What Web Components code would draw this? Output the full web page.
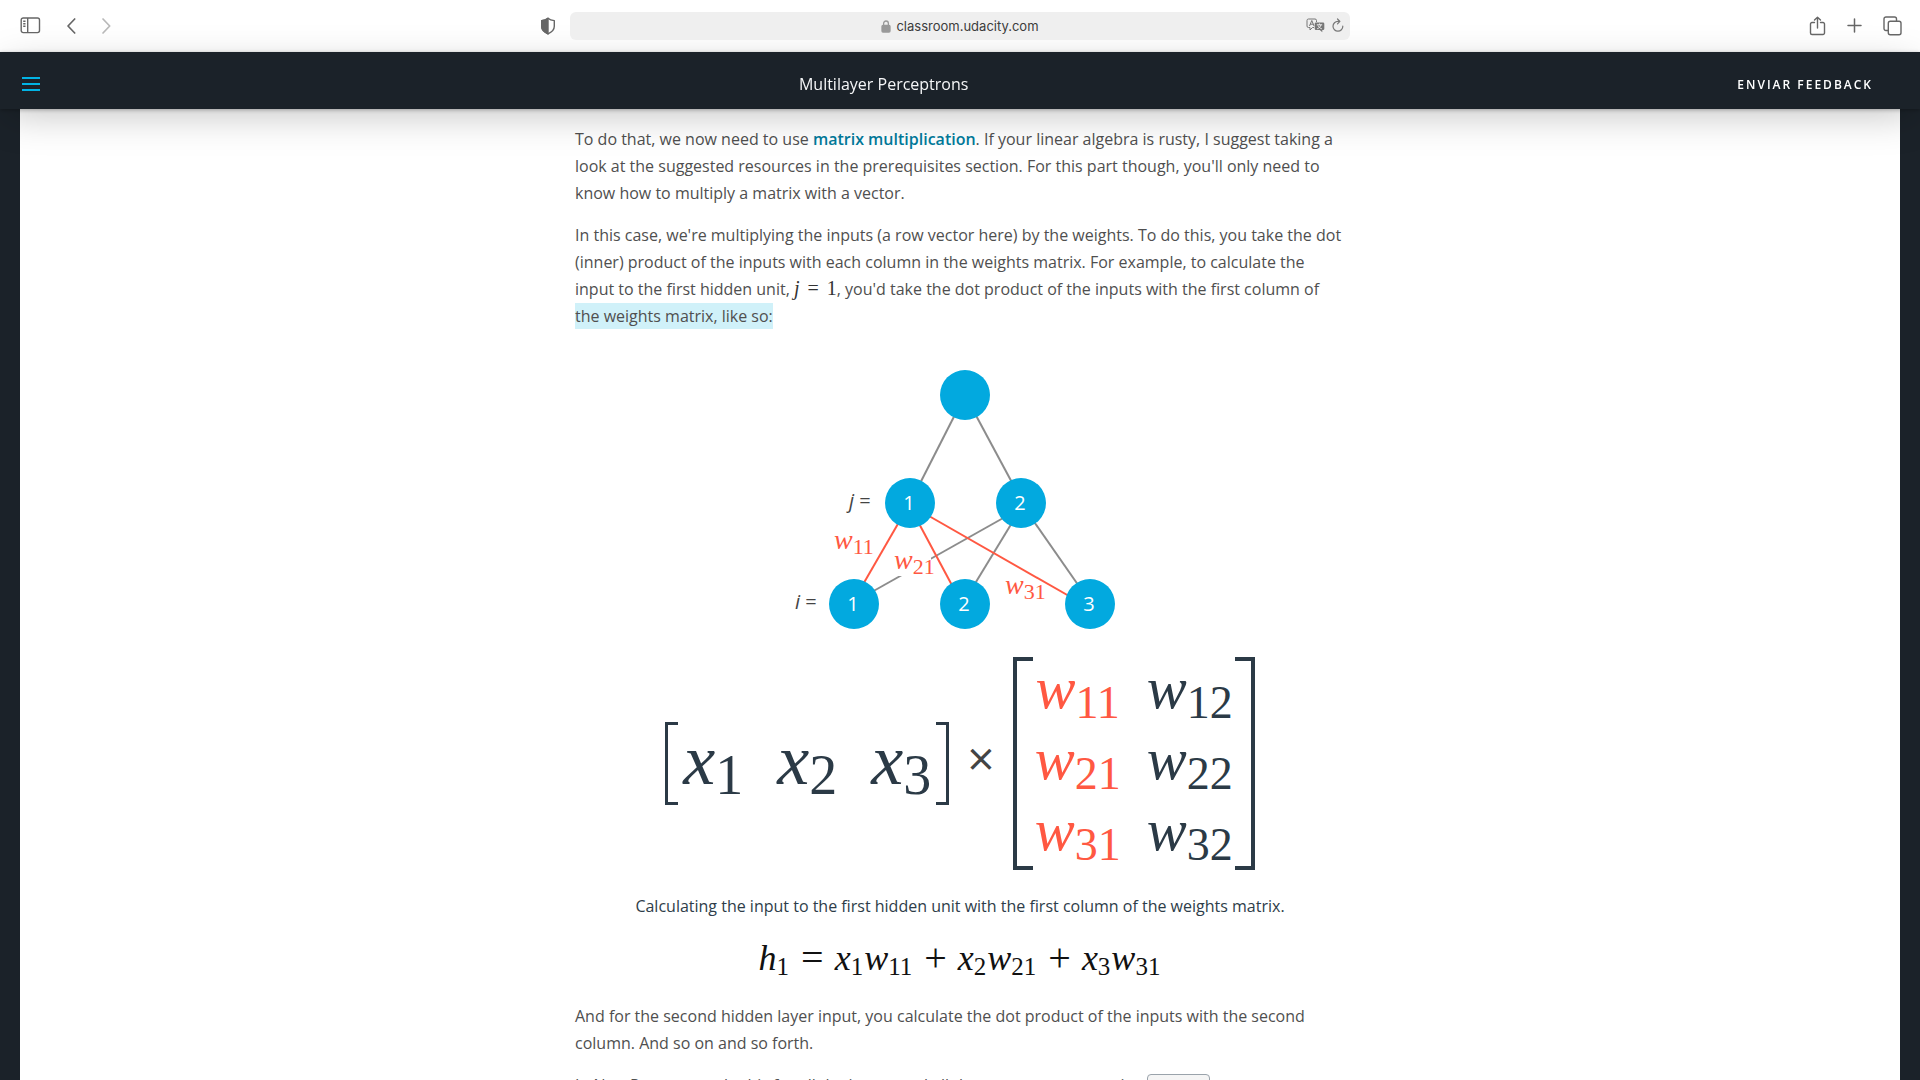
<!DOCTYPE html>
<html lang="en">
<head>
<meta charset="utf-8">
<title>Multilayer Perceptrons</title>
<style>
  html, body { margin: 0; height: 100%; }
  body { font-family: "Open Sans", sans-serif; background: #1b2229; overflow: hidden; }
  figcaption { margin-top: 23px; }
  a { color: #017a9b; font-weight: 600; text-decoration: none; }
  mark { background: #d0f1f9; color: inherit; padding: 2px 0; }
  code { display: inline-block; padding: 0 5px; border: 1px solid #9aa3ab; border-radius: 4px; background: #f5f5f5; font: 14px/24px "Liberation Mono", monospace; }
</style>
</head>
<body>
<classroom-app>
  <browser-bar slot="top" address="classroom.udacity.com"></browser-bar>
  <lesson-header slot="top" heading="Multilayer Perceptrons" action="ENVIAR FEEDBACK"></lesson-header>
  <lesson-text>
    <p>To do that, we now need to use <a href="#matrix">matrix multiplication</a>. If your linear algebra is rusty, I suggest taking a look at the suggested resources in the prerequisites section. For this part though, you'll only need to know how to multiply a matrix with a vector.</p>
    <p>In this case, we're multiplying the inputs (a row vector here) by the weights. To do this, you take the dot (inner) product of the inputs with each column in the weights matrix. For example, to calculate the input to the first hidden unit, <math-inline><i>j</i><span>=</span>1</math-inline>, you'd take the dot product of the inputs with the first column of <mark>the weights matrix, like so:</mark></p>
    <figure>
      <network-diagram></network-diagram>
      <matrix-product></matrix-product>
      <figcaption>Calculating the input to the first hidden unit with the first column of the weights matrix.</figcaption>
    </figure>
    <math-equation></math-equation>
    <p>And for the second hidden layer input, you calculate the dot product of the inputs with the second column. And so on and so forth.</p>
    <p>In NumPy, you can do this for all the inputs and all the outputs at once using <code>np.dot</code></p>
  </lesson-text>
</classroom-app>

<script>
function define(name, render) {
  customElements.define(name, class extends HTMLElement {
    connectedCallback() {
      if (this.shadowRoot) return;
      this.attachShadow({ mode: 'open' }).innerHTML = render(this);
    }
  });
}

define('classroom-app', () => `
<style>
  :host { display: flex; flex-direction: column; height: 100vh; background: #1b2229; }
  header { position: relative; z-index: 1; flex: none; }
  main { flex: 1; min-height: 0; margin: 0 20px; padding: 17px 20px 0; background: #fff; overflow: auto; scrollbar-width: none; }
</style>
<header><slot name="top"></slot></header>
<main><slot></slot></main>`);

define('browser-bar', el => `
<style>
  :host { display: grid; grid-template-columns: 1fr minmax(0, 780px) 1fr; align-items: center; height: 52px; background: #fff; color: #666; font-family: Inter, sans-serif; }
  button { all: unset; display: flex; cursor: pointer; }
  svg { display: block; fill: none; stroke: currentColor; }
  .left { display: flex; align-items: center; padding: 0 14px 1px 20px; }
  .left button:nth-child(2) { margin-left: 24px; }
  .left button:nth-child(3) { margin-left: 23px; color: #b8b8b8; }
  .left button:last-child { margin-left: auto; }
  .address { display: grid; grid-template-columns: 1fr auto 1fr; align-items: center; height: 28px; border-radius: 6px; background: #efefef; }
  label { grid-column: 2; display: flex; align-items: center; gap: 5px; color: #999; }
  input { all: unset; field-sizing: content; font-size: 13px; line-height: 20px; color: #3c3c3c; }
  .tools { display: flex; justify-content: flex-end; align-items: center; gap: 7px; padding: 0 6px 1px 0; color: #777; }
  .right { display: flex; justify-content: flex-end; align-items: center; gap: 21px; padding: 0 18px 1px 0; }
</style>
<div class="left">
  <button aria-label="Sidebar"><svg width="21" height="17" stroke-width="1.4"><rect x="1.2" y="1" width="18.3" height="14.6" rx="2"/><path d="M7.7 1v14.6M3.2 4.3h2.3M3.2 6.8h2.3M3.2 9.3h2.3"/></svg></button>
  <button aria-label="Back"><svg width="12" height="18" stroke-width="1.7" stroke-linecap="round" stroke-linejoin="round"><path d="M9.7 2 3 9l6.700 7"/></svg></button>
  <button aria-label="Forward"><svg width="12" height="18" stroke-width="1.7" stroke-linecap="round" stroke-linejoin="round"><path d="M3 2l6.700 7L3 16"/></svg></button>
  <button aria-label="Privacy report"><svg width="16" height="18" stroke-width="1.4" stroke-linejoin="round"><path d="M8 1.200C6.200 2.700 4 3.300 1.700 3.600V9.300c0 3.600 2.700 6 6.300 7.600 3.600-1.600 6.300-4 6.300-7.600V3.600C12 3.300 9.800 2.700 8 1.200z"/><path d="M8 1.200C6.200 2.700 4 3.300 1.700 3.600V9.300c0 3.600 2.700 6 6.300 7.600z" fill="currentColor"/></svg></button>
</div>
<div class="address">
  <label>
    <svg width="10" height="13" stroke-width="1.300"><rect x="1" y="5.500" width="8" height="6.500" rx="1" fill="currentColor"/><path d="M2.600 6V3.600a2.400 2.600 0 0 1 4.800 0V6"/></svg>
    <input type="text" aria-label="Address" value="${el.getAttribute('address')}">
  </label>
  <div class="tools">
    <button aria-label="Translate"><svg width="19" height="15" stroke-width="1"><path d="M8 9.500H6.500l-2.500 2.500V9.500H2.500a1.500 1.500 0 0 1-1.500-1.500V2.500A1.500 1.500 0 0 1 2.500 1h6.500a1.500 1.500 0 0 1 1.500 1.500V4"/><path d="M3.500 8l2.300-5.500L8 8M4.200 6.200h3.200"/><path d="M10 4.500h7a1.300 1.300 0 0 1 1.300 1.300v4.900A1.300 1.300 0 0 1 17 12h-.7v2.300L13.800 12H10a1.300 1.300 0 0 1-1.300-1.300V5.800A1.300 1.300 0 0 1 10 4.500z" fill="currentColor" stroke="none"/><path d="M10.800 6.800h5.400M13.500 5.500v1.300M11.200 10.800c2-.8 3.200-2 3.800-4M12 7.500c.7 1.500 2 2.700 3.800 3.300" stroke="#efefef"/></svg></button>
    <button aria-label="Reload"><svg width="12" height="15" stroke-width="1.200" stroke-linecap="round" stroke-linejoin="round"><path d="M10.800 8.200A4.900 4.900 0 1 1 6 3.400h1.500M5.500 1l2.400 2.400-2.400 2.400"/></svg></button>
  </div>
</div>
<div class="right">
  <button aria-label="Share"><svg width="17" height="20" stroke-width="1.400" stroke-linecap="round" stroke-linejoin="round"><path d="M5.500 6.500H3a1.500 1.500 0 0 0-1.500 1.500v9A1.500 1.500 0 0 0 3 18.500h11a1.500 1.500 0 0 0 1.500-1.500V8A1.500 1.500 0 0 0 14 6.500h-2.500M8.500 12V1.300M5.500 4l3-2.800 3 2.800"/></svg></button>
  <button aria-label="New tab"><svg width="15" height="15" stroke-width="1.500" stroke-linecap="round"><path d="M7.500 1v13M1 7.500h13"/></svg></button>
  <button aria-label="Tab overview"><svg width="19" height="20" stroke-width="1.400"><path d="M5 14.500H3a2 2 0 0 1-2-2V3a2 2 0 0 1 2-2h8.500a2 2 0 0 1 2 2v2"/><rect x="5.300" y="5.200" width="12.700" height="13.500" rx="2"/></svg></button>
</div>`);

define('lesson-header', el => `
<style>
  :host { display: flex; align-items: center; height: 57px; background: #1b2229; color: #fff;
    box-shadow: 0 1px 4px rgba(0,0,0,.28), 0 10px 40px -6px rgba(0,0,0,.26); }
  button { all: unset; cursor: pointer; display: flex; }
  .menu { width: 38px; padding-left: 22px; padding-top: 7px; }
  h1 { flex: 1; margin: 0; padding-top: 7px; text-align: center; font-size: 16px; line-height: 24px; font-weight: 400; color: #f5f6f7; }
  .action { padding: 8px 47px 0 30px; font-size: 12px; line-height: 24px; font-weight: 600; letter-spacing: 2px; }
</style>
<button class="menu" aria-label="Menu"><svg width="18" height="14" fill="#02b3e4"><path d="M0 0h18v2H0zM0 6h18v2H0zM0 12h18v2H0z"/></svg></button>
<h1>${el.getAttribute('heading')}</h1>
<button class="action">${el.getAttribute('action')}</button>`);

define('lesson-text', () => `
<style>
  :host { display: block; max-width: 770px; margin: 0 auto; color: #4f4f4f; font-size: 16px; line-height: 27px; }
  ::slotted(p) { margin: 0 0 15px; }
  ::slotted(figure) { margin: 40px 0 18px; text-align: center; color: #2e3d49; }
</style>
<slot></slot>`);

define('math-inline', () => `
<style>
  :host { font-family: "Liberation Serif", serif; font-size: 20px; line-height: 20px; color: #333; white-space: nowrap; }
  ::slotted(span) { margin: 0 8px; }
</style>
<slot></slot>`);

define('network-diagram', () => {
  const weight = (x, y, n) => `<text class="w" x="${x}" y="${y}"><tspan font-style="italic">w</tspan><tspan font-size="22" dy="5">${n}</tspan></text>`;
  const node = (x, y, n = '') => `<circle cx="${x}" cy="${y}" r="25"/><text class="n" x="${x - 1}" y="${y + 7}">${n}</text>`;
  return `
<style>
  :host { display: block; }
  svg { display: block; width: 340px; max-width: 100%; margin: 0 auto; }
  line { stroke: #8c8c8c; stroke-width: 2; }
  .hot line { stroke: #ff5842; }
  circle { fill: #02a9df; }
  .n { fill: #fff; font: 20px "Open Sans", sans-serif; text-anchor: middle; }
  .l { fill: #444; font: 20px "Open Sans", sans-serif; }
  .w { fill: #ff5842; font: 28px "Liberation Serif", serif; }
</style>
<svg viewBox="790 370 340 260" role="img" aria-label="Neural network with weights">
  <line x1="965" y1="395" x2="910" y2="503"/><line x1="965" y1="395" x2="1023" y2="503"/>
  <line x1="1021" y1="508" x2="854" y2="602"/><line x1="1021" y1="508" x2="965" y2="600"/><line x1="1021" y1="503" x2="1090" y2="602"/>
  <rect x="895" y="554" width="36" height="22" fill="#fff"/>
  <g class="hot"><line x1="910" y1="503" x2="854" y2="600"/><line x1="908" y1="503" x2="962" y2="604"/><line x1="908" y1="504" x2="1090" y2="608"/></g>
  ${node(965, 395)}${node(910, 503, 1)}${node(1021, 503, 2)}${node(854, 604, 1)}${node(965, 604, 2)}${node(1090, 604, 3)}
  <text class="l" x="849" y="508"><tspan font-style="italic">j</tspan> =</text>
  <text class="l" x="795" y="609"><tspan font-style="italic">i</tspan> =</text>
  ${weight(834, 549, 11)}${weight(894, 569, 21)}${weight(1005, 594, 31)}
</svg>`;
});

define('matrix-product', () => {
  const cell = (v, n, hot) => `<span class="${hot ? 'hot' : ''}"><i>${v}</i><sub>${n}</sub></span>`;
  return `
<style>
  :host { display: flex; justify-content: center; align-items: center; margin: 27px 0 0; font-family: "Liberation Serif", serif; color: #2b3a46; }
  .m { display: grid; position: relative; white-space: nowrap; }
  .m::before, .m::after { content: ""; position: absolute; top: 0; bottom: 0; box-sizing: border-box; border: solid #2b3a46; }
  .m::before { left: 0; } .m::after { right: 0; }
  .x { grid-template-columns: repeat(3, auto); column-gap: 34px; padding: 0 18px; height: 83px; font-size: 72px; line-height: 76px; }
  .x::before, .x::after { width: 13px; border-width: 3px; }
  .w { grid-template-columns: repeat(2, auto); grid-auto-rows: 71px; column-gap: 26px; padding: 0 22px; font-size: 60px; line-height: 62px; }
  .w::before, .w::after { width: 20px; border-width: 4px; }
  .m::before { border-right: 0; } .m::after { border-left: 0; }
  sub { vertical-align: baseline; position: relative; line-height: 0; top: 10px; }
  .x sub { font-size: 56px; }
  .w sub { font-size: 46px; }
  .hot { color: #ff5842; }
  b { font: 500 48px/48px "Open Sans", sans-serif; color: #444; margin: 0 18px; padding-bottom: 12px; }
</style>
<div class="m x">${cell('x', 1)}${cell('x', 2)}${cell('x', 3)}</div>
<b>×</b>
<div class="m w">${[1, 2, 3].map(r => cell('w', r + '1', true) + cell('w', r + '2')).join('')}</div>`;
});

define('math-equation', () => {
  const v = (l, n) => `<i>${l}</i><sub>${n}</sub>`;
  return `
<style>
  :host { display: flex; justify-content: center; gap: 11px; margin: 0 0 25px; color: #111; font: 36px/40px "Liberation Serif", serif; white-space: nowrap; }
  sub { font-size: 25px; line-height: 0; vertical-align: baseline; position: relative; top: 5px; margin-right: 1px; }
  .op { font-size: 40px; }
</style>
<span>${v('h', 1)}</span><span class="op">=</span><span>${v('x', 1)}${v('w', 11)}</span><span class="op">+</span><span>${v('x', 2)}${v('w', 21)}</span><span class="op">+</span><span>${v('x', 3)}${v('w', 31)}</span>`;
});
</script>
</body>
</html>
